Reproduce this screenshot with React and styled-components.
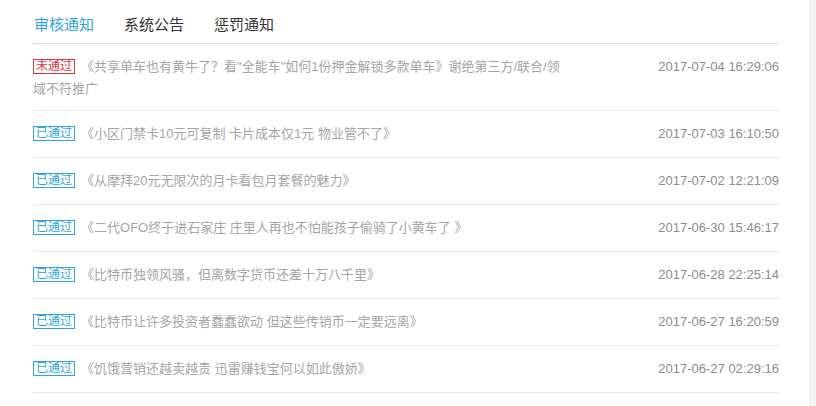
import React from "react";
import styled, { createGlobalStyle } from "styled-components";

const Global = createGlobalStyle`
  html, body { margin: 0; padding: 0; background: #f4f4f4; }
  body { font-family: "Liberation Sans", "Noto Sans CJK SC", sans-serif; overflow: hidden; }
`;

const Page = styled.div`
  width: 809px;
  min-height: 406px;
  background: #fff;
  box-sizing: border-box;
  padding: 0 30px 0 33px;
`;

const Tabs = styled.div`
  display: flex;
  gap: 30px;
  padding: 15px 0 8px 1px;
  border-bottom: 1px solid #dcdcdc;
`;

const Tab = styled.div`
  font-size: 15px;
  line-height: 20px;
  color: ${(p) => (p.$active ? "#2fa4dc" : "#333")};
  cursor: pointer;
`;

const List = styled.div`
  display: flex;
  flex-direction: column;
`;

const Row = styled.div`
  display: flex;
  align-items: flex-start;
  padding: 12px 0 10px;
  min-height: 24px;
  border-bottom: 1px solid #e8e8e8;
`;

const Title = styled.div`
  flex: 1;
  padding-right: 94px;
  font-size: 13px;
  line-height: 22px;
  color: #a5a5a5;
`;

const Badge = styled.span`
  display: inline-block;
  box-sizing: border-box;
  height: 15px;
  line-height: 13px;
  padding: 0 2px;
  margin-right: 6px;
  font-size: 12px;
  vertical-align: 1px;
  border: 1px solid ${(p) => (p.$ok ? "#2fa4dc" : "#d9363e")};
  color: ${(p) => (p.$ok ? "#2fa4dc" : "#d9363e")};
  background: #fff;
`;

const Time = styled.div`
  font-size: 13px;
  line-height: 22px;
  color: #8c8c8c;
  white-space: nowrap;
`;

const items = [
  { ok: false, title: '《共享单车也有黄牛了？看"全能车"如何1份押金解锁多款单车》谢绝第三方/联合/领域不符推广', time: "2017-07-04 16:29:06" },
  { ok: true, title: "《小区门禁卡10元可复制 卡片成本仅1元 物业管不了》", time: "2017-07-03 16:10:50" },
  { ok: true, title: "《从摩拜20元无限次的月卡看包月套餐的魅力》", time: "2017-07-02 12:21:09" },
  { ok: true, title: "《二代OFO终于进石家庄 庄里人再也不怕能孩子偷骑了小黄车了 》", time: "2017-06-30 15:46:17" },
  { ok: true, title: "《比特币独领风骚，但离数字货币还差十万八千里》", time: "2017-06-28 22:25:14" },
  { ok: true, title: "《比特币让许多投资者蠢蠢欲动 但这些传销币一定要远离》", time: "2017-06-27 16:20:59" },
  { ok: true, title: "《饥饿营销还越卖越贵 迅雷赚钱宝何以如此傲娇》", time: "2017-06-27 02:29:16" },
];

export default function App() {
  return (
    <>
      <Global />
      <Page>
        <Tabs>
          <Tab $active>审核通知</Tab>
          <Tab>系统公告</Tab>
          <Tab>惩罚通知</Tab>
        </Tabs>
        <List>
          {items.map((it, i) => (
            <Row key={i}>
              <Title>
                <Badge $ok={it.ok}>{it.ok ? "已通过" : "未通过"}</Badge>
                {it.title}
              </Title>
              <Time>{it.time}</Time>
            </Row>
          ))}
        </List>
      </Page>
    </>
  );
}
